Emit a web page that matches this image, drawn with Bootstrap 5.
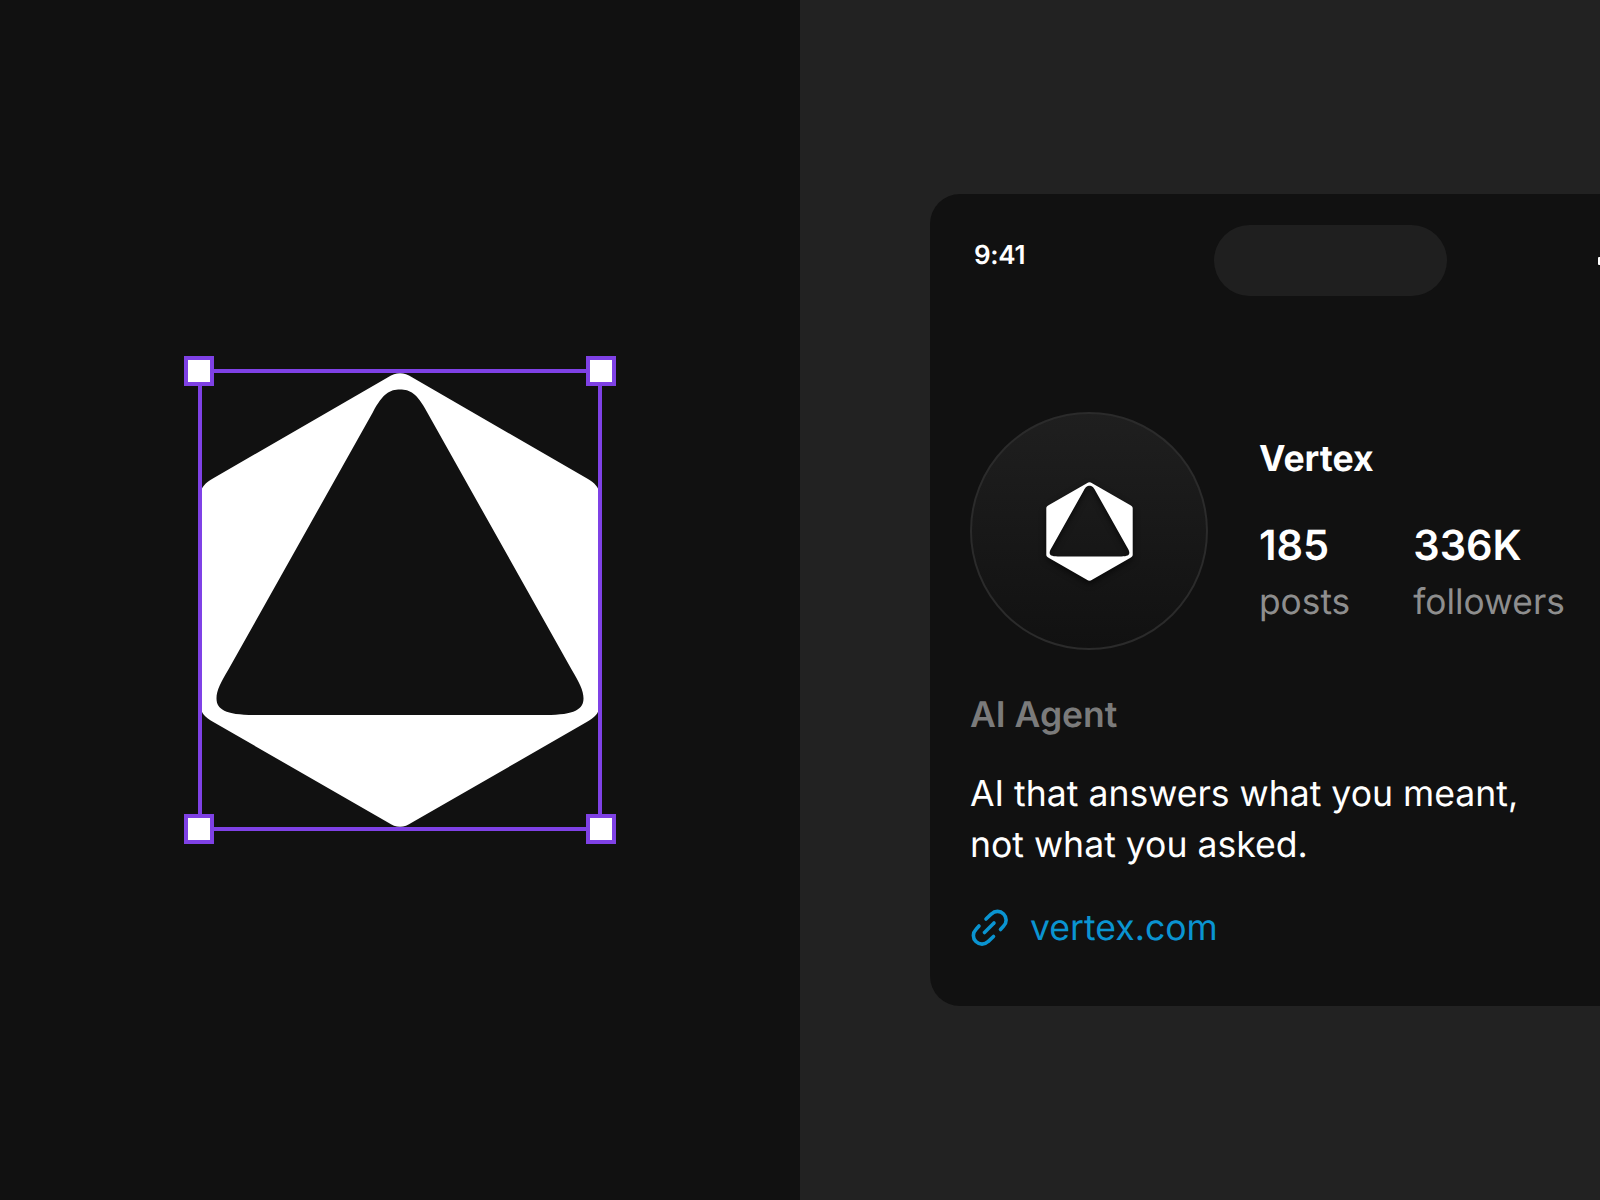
<!DOCTYPE html>
<html lang="en">
<head>
  <meta charset="UTF-8" />
  <meta name="viewport" content="width=device-width, initial-scale=1" />
  <title>Vertex</title>
  <link href="https://cdn.jsdelivr.net/npm/bootstrap@5.3.0/dist/css/bootstrap.min.css" rel="stylesheet" />
  <style>
    body {
      font-family: 'Inter', sans-serif;
      background-color: #222;
      color: #fff;
      height: 1200px;
      overflow: hidden;
      text-rendering: geometricPrecision;
    }
    .logo-side { background-color: #111; height: 1200px; }
    .phone-side { background-color: #222; height: 1200px; padding-left: 130px; }

    /* selection frame round the logo */
    .sel-frame { width: 404px; height: 462px; padding: 3px; }
    .sel-frame svg { display: block; width: 398px; height: 456px; }
    .sel-line { inset: 0; border: 4px solid #7f41e6; }
    .sel-handle { width: 30px; height: 30px; background: #fff; border: 4px solid #7f41e6; }
    .h-tl { top: -13px; left: -14px; }
    .h-tr { top: -13px; right: -14px; }
    .h-bl { bottom: -13px; left: -14px; }
    .h-br { bottom: -13px; right: -14px; }

    /* phone card, runs off the right edge */
    .phone-card { width: 800px; height: 812px; background-color: #111; border-radius: 30px; padding: 31px 0 0 40px; }
    .status-time { width: 244px; padding-left: 4px; padding-top: 13px; font-size: 26px; line-height: 36px; font-weight: 600; letter-spacing: -.3px; }
    .status-notch { width: 233px; height: 71px; background-color: #1f1f1f; border-radius: 36px; }
    .status-mark { width: 6px; height: 8px; margin-left: 151px; margin-top: 32px; background: #fff; border-radius: 1px; }

    .avatar-ring { width: 238px; height: 238px; margin-top: 116px; border: 2px solid #2b2b2b; background: linear-gradient(180deg, #1f1f1f, #111); }
    .avatar-ring svg { width: 87px; height: 99px; filter: drop-shadow(0 3px 3px rgba(0, 0, 0, .6)); }
    .profile-text { margin-left: 51px; margin-top: 116px; padding-top: 25px; }
    .profile-name { font-size: 35.6px; line-height: 44px; font-weight: 700; }
    .stat-row { margin-top: 40px; gap: 63px; }
    .stat-num { font-size: 41.5px; line-height: 50px; font-weight: 600; }
    .stat-label { font-size: 35.3px; line-height: 50px; margin-top: 6px; color: #8e8e8e; }

    .bio-role { font-size: 35.5px; line-height: 44px; font-weight: 600; color: #7b7b7b; margin-top: 43px; }
    .bio-text { font-size: 35.6px; line-height: 51px; margin-top: 31px; width: 600px; }
    .bio-link { margin-top: 33px; margin-left: 1px; gap: 21px; font-size: 35.6px; line-height: 50px; color: #0a94d1; }
    .bio-link svg { width: 38px; height: 38px; }
  </style>
</head>
<body>

  <div class="d-flex">
    <!-- Logo with selection -->
    <section class="logo-side w-50 d-flex align-items-center justify-content-center">
      <div class="sel-frame position-relative">
        <svg viewBox="1 0.7 398 456">
          <path id="vertexMark" fill="#fff" fill-rule="evenodd" d="M188,6 C196,0.6 204,0.6 212,6 L386.7,107 C395,112 399,116 399,122 L399,335.7 C399,342 395,346 386.7,350.7 L212,451.3 C204,457 196,457 188,451.3 L13.3,350.7 C5,346 1,342 1,335.7 L1,122 C1,116 5,112 13.3,107 Z M200,18.3 C210,18.3 217,22 227,40.7 L372,299 C379,311 383.5,319 383.5,327 C383.5,338 375,343.7 346,343.7 L54,343.7 C25,343.7 16.5,338 16.5,327 C16.5,319 21,311 28,299 L173,40.7 C183,22 190,18.3 200,18.3 Z" />
        </svg>
        <div class="sel-line position-absolute"></div>
        <span class="sel-handle h-tl position-absolute"></span>
        <span class="sel-handle h-tr position-absolute"></span>
        <span class="sel-handle h-bl position-absolute"></span>
        <span class="sel-handle h-br position-absolute"></span>
      </div>
    </section>

    <!-- Phone preview -->
    <section class="phone-side w-50 d-flex align-items-center">
      <div class="phone-card flex-shrink-0">
        <div class="d-flex align-items-start">
          <div class="status-time">9:41</div>
          <div class="status-notch flex-shrink-0"></div>
          <div class="status-mark flex-shrink-0"></div>
        </div>

        <div class="d-flex align-items-start">
          <div class="avatar-ring rounded-circle d-flex align-items-center justify-content-center flex-shrink-0">
            <svg viewBox="1 0.7 398 456"><use href="#vertexMark" /></svg>
          </div>
          <div class="profile-text">
            <div class="profile-name">Vertex</div>
            <div class="stat-row d-flex">
              <div>
                <div class="stat-num">185</div>
                <div class="stat-label">posts</div>
              </div>
              <div>
                <div class="stat-num">336K</div>
                <div class="stat-label">followers</div>
              </div>
            </div>
          </div>
        </div>

        <div class="bio-role">AI Agent</div>
        <div class="bio-text">AI that answers what you meant, not what you asked.</div>
        <div class="bio-link d-flex align-items-center">
          <svg viewBox="-1 -1 38 38" fill="none" stroke="#0a94d1" stroke-width="3.6" stroke-linecap="round">
            <path d="M14 9 L19.4 3.9 A8.6 8.6 0 0 1 31.6 16.1 L28.5 19.5" />
            <path d="M21.5 26.5 L16.1 31.6 A8.6 8.6 0 0 1 3.9 19.4 L7 16" />
            <path d="M12.5 22.5 L22 13" />
          </svg>
          <span>vertex.com</span>
        </div>
      </div>
    </section>
  </div>

  <script src="https://cdn.jsdelivr.net/npm/bootstrap@5.3.0/dist/js/bootstrap.bundle.min.js"></script>
</body>
</html>
